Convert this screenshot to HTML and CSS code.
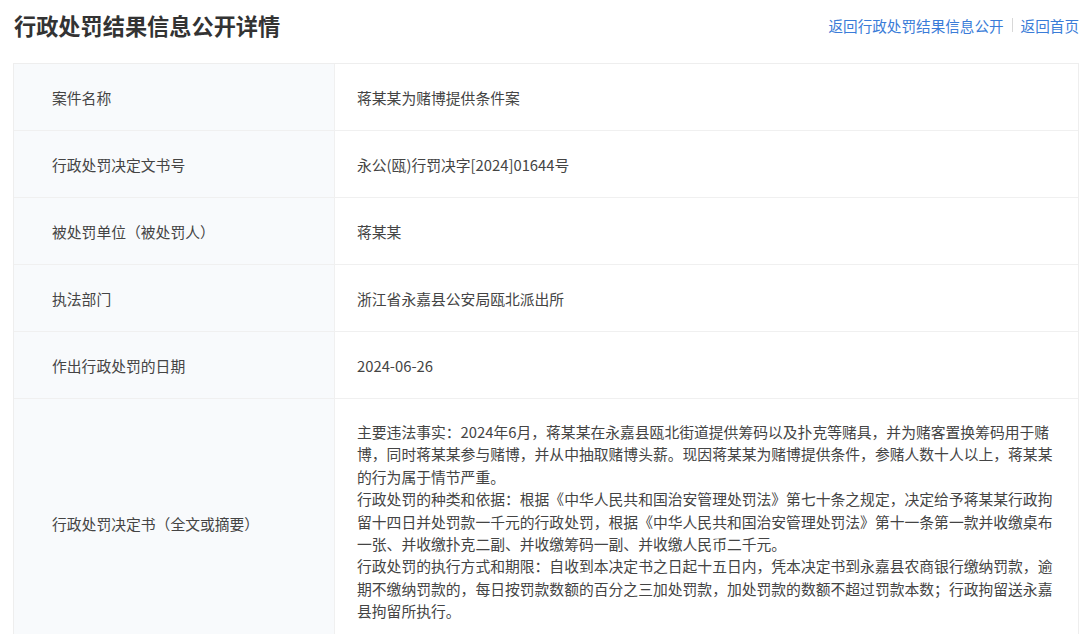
FILE: index.html
```html
<!DOCTYPE html>
<html lang="zh-CN">
<head>
<meta charset="utf-8">
<title>行政处罚结果信息公开详情</title>
<link rel="stylesheet" href="styles.css">
</head>
<body>
<div class="page">
  <header class="head">
    <h1 class="title">行政处罚结果信息公开详情</h1>
    <nav class="links">
      <a href="#">返回行政处罚结果信息公开</a>
      <span class="sep"></span>
      <a href="#">返回首页</a>
    </nav>
  </header>
  <div class="table">
    <div class="row">
      <div class="label">案件名称</div>
      <div class="value">蒋某某为赌博提供条件案</div>
    </div>
    <div class="row">
      <div class="label">行政处罚决定文书号</div>
      <div class="value">永公(瓯)行罚决字[2024]01644号</div>
    </div>
    <div class="row">
      <div class="label">被处罚单位（被处罚人）</div>
      <div class="value">蒋某某</div>
    </div>
    <div class="row">
      <div class="label">执法部门</div>
      <div class="value">浙江省永嘉县公安局瓯北派出所</div>
    </div>
    <div class="row">
      <div class="label">作出行政处罚的日期</div>
      <div class="value">2024-06-26</div>
    </div>
    <div class="row long">
      <div class="label">行政处罚决定书（全文或摘要）</div>
      <div class="value text">主要违法事实：2024年6月，蒋某某在永嘉县瓯北街道提供筹码以及扑克等赌具，并为赌客置换筹码用于赌博，同时蒋某某参与赌博，并从中抽取赌博头薪。现因蒋某某为赌博提供条件，参赌人数十人以上，蒋某某的行为属于情节严重。<br>行政处罚的种类和依据：根据《中华人民共和国治安管理处罚法》第七十条之规定，决定给予蒋某某行政拘留十四日并处罚款一千元的行政处罚，根据《中华人民共和国治安管理处罚法》第十一条第一款并收缴桌布一张、并收缴扑克二副、并收缴筹码一副、并收缴人民币二千元。<br>行政处罚的执行方式和期限：自收到本决定书之日起十五日内，凭本决定书到永嘉县农商银行缴纳罚款，逾期不缴纳罚款的，每日按罚款数额的百分之三加处罚款，加处罚款的数额不超过罚款本数；行政拘留送永嘉县拘留所执行。</div>
    </div>
  </div>
</div>
</body>
</html>
```
FILE: styles.css
```css
html, body {
  margin: 0;
  padding: 0;
  background: #ffffff;
}
body {
  font-family: "Noto Sans CJK SC", "Microsoft YaHei", sans-serif;
  color: #333333;
  overflow: hidden;
}
.page {
  padding: 0 1px 0 13px;
}
.head {
  height: 52px;
  display: flex;
  align-items: center;
  justify-content: space-between;
  padding: 0 0 0 1px;
}
.title {
  margin: 0;
  font-size: 22.2px;
  font-weight: bold;
  color: #333333;
  position: relative;
  top: -1px;
}
.links {
  display: flex;
  align-items: center;
  font-size: 14.6px;
  position: relative;
  top: -1px;
}
.links a {
  color: #3a7cd8;
  text-decoration: none;
}
.sep {
  width: 1px;
  height: 14px;
  background: #d8d8d8;
  margin: 0 8px;
}
.table {
  margin-top: 11px;
  border: 1px solid #eeeeee;
  border-bottom: none;
}
.row {
  display: grid;
  grid-template-columns: 321px 1fr;
  border-bottom: 1px solid #f0f0f0;
}
.label {
  background: #f8fafc;
  border-right: 1px solid #f0f0f0;
  padding: 0 0 0 38px;
  display: flex;
  align-items: center;
  font-size: 14.8px;
  color: #444444;
  height: 66px;
}
.value {
  display: flex;
  align-items: center;
  padding: 0 22px;
  font-size: 14.8px;
  color: #444444;
  height: 66px;
}
.long .label {
  height: auto;
}
.value.text {
  display: block;
  height: auto;
  line-height: 22.4px;
  padding: 22px 20px 26px 22px;
}
```
